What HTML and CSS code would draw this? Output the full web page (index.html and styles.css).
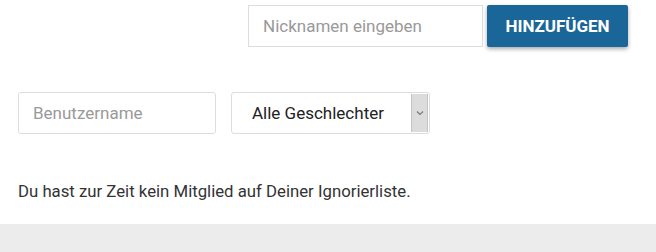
FILE: index.html
```html
<!DOCTYPE html>
<html lang="de">
<head>
  <meta charset="UTF-8" />
  <meta name="viewport" content="width=device-width, initial-scale=1.0"/>
  <title>Ignorierliste</title>
  <link rel="stylesheet" href="styles.css">
</head>
<body>

  <div class="panel">
    <div class="add-row">
      <input type="text" class="feld nick" placeholder="Nicknamen eingeben">
      <button class="btn">Hinzufügen</button>
    </div>

    <div class="filter-row">
      <input type="text" class="feld name" placeholder="Benutzername">
      <div class="auswahl">
        <span class="auswahl-text">Alle Geschlechter</span>
        <span class="auswahl-pfeil">
          <svg width="8" height="6" viewBox="0 0 8 6"><path d="M1 1.5 L4 4.5 L7 1.5" fill="none" stroke="#777" stroke-width="1.2"/></svg>
        </span>
      </div>
    </div>

    <p class="hinweis">Du hast zur Zeit kein Mitglied auf Deiner Ignorierliste.</p>
  </div>

</body>
</html>
```

FILE: styles.css
```css
body {
  font-family: Roboto, "Liberation Sans", sans-serif;
  margin: 0;
  background-color: #ececec;
}
.panel {
  background: white;
  padding: 5px 28px 0 18px;
  height: 219px;
  box-shadow: 0 1px 4px rgba(0,0,0,0.4);
}
.add-row {
  display: flex;
  justify-content: flex-end;
  gap: 4px;
}
.feld {
  box-sizing: border-box;
  height: 42px;
  padding: 0 14px;
  font-family: inherit;
  font-size: 17px;
  color: #333;
  border: 1px solid #ddd;
  outline: none;
}
.feld::placeholder {
  color: #999;
}
.nick {
  width: 235px;
}
.btn {
  box-sizing: border-box;
  width: 141px;
  height: 42px;
  background-color: #1a6699;
  color: white;
  font-family: inherit;
  font-size: 17px;
  font-weight: bold;
  text-transform: uppercase;
  border: none;
  border-radius: 2px;
  box-shadow: 0 2px 4px rgba(0,0,0,0.35);
  cursor: pointer;
}
.filter-row {
  display: flex;
  gap: 15px;
  margin-top: 45px;
}
.name {
  width: 198px;
  border-radius: 3px;
}
.auswahl {
  box-sizing: border-box;
  display: flex;
  width: 199px;
  height: 42px;
  border: 1px solid #ddd;
  border-radius: 3px;
}
.auswahl-text {
  flex: 1;
  display: flex;
  align-items: center;
  padding-left: 20px;
  font-size: 17px;
  color: #222;
}
.auswahl-pfeil {
  display: flex;
  align-items: center;
  justify-content: center;
  width: 15px;
  margin: 1px 1px 1px 0;
  background: #dcdcdc;
  border-left: 1px solid #c4c4c4;
  border-right: 1px solid #c4c4c4;
}
.hinweis {
  margin: 0;
  margin-top: 47px;
  font-size: 16.75px;
  color: #333;
}
```
